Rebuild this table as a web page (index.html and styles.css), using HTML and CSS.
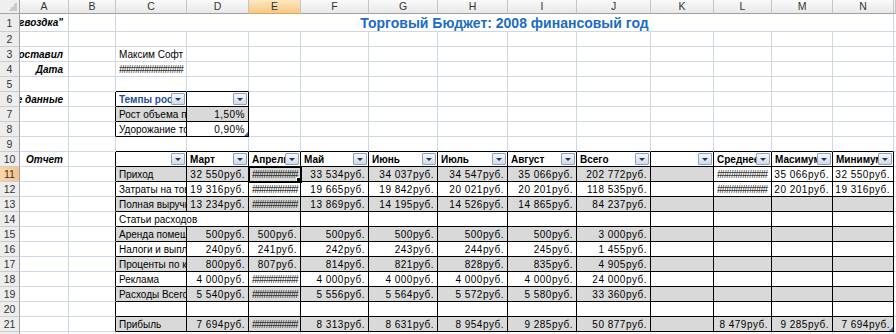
FILE: index.html
```html
<!DOCTYPE html>
<html lang="ru">
<head>
<meta charset="utf-8">
<title>Торговый Бюджет: 2008 финансовый год</title>
<link rel="stylesheet" href="styles.css">
</head>
<body>
<div class="sheet">
  <div class="row hdr">
    <div class="corner"></div>
    <div class="ch">A</div><div class="ch">B</div><div class="ch">C</div><div class="ch">D</div><div class="ch on">E</div><div class="ch">F</div><div class="ch">G</div><div class="ch">H</div><div class="ch">I</div><div class="ch">J</div><div class="ch">K</div><div class="ch">L</div><div class="ch">M</div><div class="ch">N</div><div class="ch"></div>
  </div>

  <div class="row r1">
    <div class="rh">1</div>
    <div class="c lab">гвоздка"</div>
    <div class="c"></div>
    <div class="c title">Торговый Бюджет: 2008 финансовый год</div>
    <div class="c"></div>
  </div>

  <div class="row">
    <div class="rh">2</div>
    <div class="c"></div><div class="c"></div><div class="c"></div><div class="c"></div><div class="c"></div><div class="c"></div><div class="c"></div><div class="c"></div><div class="c"></div><div class="c"></div><div class="c"></div><div class="c"></div><div class="c"></div><div class="c"></div><div class="c"></div>
  </div>

  <div class="row">
    <div class="rh">3</div>
    <div class="c lab">оставил</div><div class="c"></div><div class="c">Максим Софт</div><div class="c"></div><div class="c"></div><div class="c"></div><div class="c"></div><div class="c"></div><div class="c"></div><div class="c"></div><div class="c"></div><div class="c"></div><div class="c"></div><div class="c"></div><div class="c"></div>
  </div>

  <div class="row">
    <div class="rh">4</div>
    <div class="c lab">Дата</div><div class="c"></div><div class="c hash">##############</div><div class="c"></div><div class="c"></div><div class="c"></div><div class="c"></div><div class="c"></div><div class="c"></div><div class="c"></div><div class="c"></div><div class="c"></div><div class="c"></div><div class="c"></div><div class="c"></div>
  </div>

  <div class="row">
    <div class="rh">5</div>
    <div class="c"></div><div class="c"></div><div class="c kb"></div><div class="c kb"></div><div class="c"></div><div class="c"></div><div class="c"></div><div class="c"></div><div class="c"></div><div class="c"></div><div class="c"></div><div class="c"></div><div class="c"></div><div class="c"></div><div class="c"></div>
  </div>

  <div class="row">
    <div class="rh">6</div>
    <div class="c lab">е данные</div><div class="c kr"></div>
    <div class="c t hd blue"><span class="lbl">Темпы роста</span><i class="dd"></i></div>
    <div class="c t hd"><span class="lbl"></span><i class="dd"></i></div>
    <div class="c"></div><div class="c"></div><div class="c"></div><div class="c"></div><div class="c"></div><div class="c"></div><div class="c"></div><div class="c"></div><div class="c"></div><div class="c"></div><div class="c"></div>
  </div>

  <div class="row">
    <div class="rh">7</div>
    <div class="c"></div><div class="c kr"></div>
    <div class="c t g">Рост объема продаж</div><div class="c t g n">1,50%</div>
    <div class="c"></div><div class="c"></div><div class="c"></div><div class="c"></div><div class="c"></div><div class="c"></div><div class="c"></div><div class="c"></div><div class="c"></div><div class="c"></div><div class="c"></div>
  </div>

  <div class="row">
    <div class="rh">8</div>
    <div class="c"></div><div class="c kr"></div>
    <div class="c t">Удорожание товара</div><div class="c t n rs">0,90%</div>
    <div class="c"></div><div class="c"></div><div class="c"></div><div class="c"></div><div class="c"></div><div class="c"></div><div class="c"></div><div class="c"></div><div class="c"></div><div class="c"></div><div class="c"></div>
  </div>

  <div class="row">
    <div class="rh">9</div>
    <div class="c"></div><div class="c"></div>
    <div class="c kb"></div><div class="c kb"></div><div class="c kb"></div><div class="c kb"></div><div class="c kb"></div><div class="c kb"></div><div class="c kb"></div><div class="c kb"></div><div class="c kb"></div><div class="c kb"></div><div class="c kb"></div><div class="c kb"></div>
    <div class="c"></div>
  </div>

  <div class="row">
    <div class="rh">10</div>
    <div class="c lab">Отчет</div><div class="c kr"></div>
    <div class="c t hd"><span class="lbl"></span><i class="dd"></i></div>
    <div class="c t hd"><span class="lbl">Март</span><i class="dd"></i></div>
    <div class="c t hd"><span class="lbl">Апрель</span><i class="dd"></i></div>
    <div class="c t hd"><span class="lbl">Май</span><i class="dd"></i></div>
    <div class="c t hd"><span class="lbl">Июнь</span><i class="dd"></i></div>
    <div class="c t hd"><span class="lbl">Июль</span><i class="dd"></i></div>
    <div class="c t hd"><span class="lbl">Август</span><i class="dd"></i></div>
    <div class="c t hd"><span class="lbl">Всего</span><i class="dd"></i></div>
    <div class="c t hd"><span class="lbl"></span><i class="dd"></i></div>
    <div class="c t hd"><span class="lbl">Среднее</span><i class="dd"></i></div>
    <div class="c t hd"><span class="lbl">Масимум</span><i class="dd"></i></div>
    <div class="c t hd"><span class="lbl">Минимум</span><i class="dd"></i></div>
    <div class="c"></div>
  </div>

  <div class="row">
    <div class="rh on">11</div>
    <div class="c"></div><div class="c kr"></div>
    <div class="c t g">Приход</div>
    <div class="c t g n">32 550руб.</div>
    <div class="c t g hash sel">##########</div>
    <div class="c t g n">33 534руб.</div>
    <div class="c t g n">34 037руб.</div>
    <div class="c t g n">34 547руб.</div>
    <div class="c t g n">35 066руб.</div>
    <div class="c t g n">202 772руб.</div>
    <div class="c t g"></div>
    <div class="c t hash">###########</div>
    <div class="c t n">35 066руб.</div>
    <div class="c t n">32 550руб.</div>
    <div class="c"></div>
  </div>

  <div class="row">
    <div class="rh">12</div>
    <div class="c"></div><div class="c kr"></div>
    <div class="c t">Затраты на товары</div>
    <div class="c t n">19 316руб.</div>
    <div class="c t hash">##########</div>
    <div class="c t n">19 665руб.</div>
    <div class="c t n">19 842руб.</div>
    <div class="c t n">20 021руб.</div>
    <div class="c t n">20 201руб.</div>
    <div class="c t n">118 535руб.</div>
    <div class="c t"></div>
    <div class="c t hash">###########</div>
    <div class="c t n">20 201руб.</div>
    <div class="c t n">19 316руб.</div>
    <div class="c"></div>
  </div>

  <div class="row">
    <div class="rh">13</div>
    <div class="c"></div><div class="c kr"></div>
    <div class="c t g">Полная выручка</div>
    <div class="c t g n">13 234руб.</div>
    <div class="c t g hash">##########</div>
    <div class="c t g n">13 869руб.</div>
    <div class="c t g n">14 195руб.</div>
    <div class="c t g n">14 526руб.</div>
    <div class="c t g n">14 865руб.</div>
    <div class="c t g n">84 237руб.</div>
    <div class="c t g"></div><div class="c t g"></div><div class="c t g"></div><div class="c t g"></div>
    <div class="c"></div>
  </div>

  <div class="row">
    <div class="rh">14</div>
    <div class="c"></div><div class="c kr"></div>
    <div class="c t span2">Статьи расходов</div>
    <div class="c t"></div><div class="c t"></div><div class="c t"></div><div class="c t"></div><div class="c t"></div><div class="c t"></div><div class="c t"></div><div class="c t"></div><div class="c t"></div><div class="c t"></div>
    <div class="c"></div>
  </div>

  <div class="row">
    <div class="rh">15</div>
    <div class="c"></div><div class="c kr"></div>
    <div class="c t g">Аренда помещения</div>
    <div class="c t g n">500руб.</div>
    <div class="c t g n">500руб.</div>
    <div class="c t g n">500руб.</div>
    <div class="c t g n">500руб.</div>
    <div class="c t g n">500руб.</div>
    <div class="c t g n">500руб.</div>
    <div class="c t g n">3 000руб.</div>
    <div class="c t g"></div><div class="c t g"></div><div class="c t g"></div><div class="c t g"></div>
    <div class="c"></div>
  </div>

  <div class="row">
    <div class="rh">16</div>
    <div class="c"></div><div class="c kr"></div>
    <div class="c t">Налоги и выплаты</div>
    <div class="c t n">240руб.</div>
    <div class="c t n">241руб.</div>
    <div class="c t n">242руб.</div>
    <div class="c t n">243руб.</div>
    <div class="c t n">244руб.</div>
    <div class="c t n">245руб.</div>
    <div class="c t n">1 455руб.</div>
    <div class="c t"></div><div class="c t"></div><div class="c t"></div><div class="c t"></div>
    <div class="c"></div>
  </div>

  <div class="row">
    <div class="rh">17</div>
    <div class="c"></div><div class="c kr"></div>
    <div class="c t g">Проценты по кредиту</div>
    <div class="c t g n">800руб.</div>
    <div class="c t g n">807руб.</div>
    <div class="c t g n">814руб.</div>
    <div class="c t g n">821руб.</div>
    <div class="c t g n">828руб.</div>
    <div class="c t g n">835руб.</div>
    <div class="c t g n">4 905руб.</div>
    <div class="c t g"></div><div class="c t g"></div><div class="c t g"></div><div class="c t g"></div>
    <div class="c"></div>
  </div>

  <div class="row">
    <div class="rh">18</div>
    <div class="c"></div><div class="c kr"></div>
    <div class="c t">Реклама</div>
    <div class="c t n">4 000руб.</div>
    <div class="c t hash">##########</div>
    <div class="c t n">4 000руб.</div>
    <div class="c t n">4 000руб.</div>
    <div class="c t n">4 000руб.</div>
    <div class="c t n">4 000руб.</div>
    <div class="c t n">24 000руб.</div>
    <div class="c t"></div><div class="c t"></div><div class="c t"></div><div class="c t"></div>
    <div class="c"></div>
  </div>

  <div class="row">
    <div class="rh">19</div>
    <div class="c"></div><div class="c kr"></div>
    <div class="c t g">Расходы Всего</div>
    <div class="c t g n">5 540руб.</div>
    <div class="c t g hash">##########</div>
    <div class="c t g n">5 556руб.</div>
    <div class="c t g n">5 564руб.</div>
    <div class="c t g n">5 572руб.</div>
    <div class="c t g n">5 580руб.</div>
    <div class="c t g n">33 360руб.</div>
    <div class="c t g"></div><div class="c t g"></div><div class="c t g"></div><div class="c t g"></div>
    <div class="c"></div>
  </div>

  <div class="row">
    <div class="rh">20</div>
    <div class="c"></div><div class="c kr"></div>
    <div class="c t"></div><div class="c t"></div><div class="c t"></div><div class="c t"></div><div class="c t"></div><div class="c t"></div><div class="c t"></div><div class="c t"></div><div class="c t"></div><div class="c t"></div><div class="c t"></div><div class="c t"></div>
    <div class="c"></div>
  </div>

  <div class="row">
    <div class="rh">21</div>
    <div class="c"></div><div class="c kr"></div>
    <div class="c t g">Прибыль</div>
    <div class="c t g n">7 694руб.</div>
    <div class="c t g hash">##########</div>
    <div class="c t g n">8 313руб.</div>
    <div class="c t g n">8 631руб.</div>
    <div class="c t g n">8 954руб.</div>
    <div class="c t g n">9 285руб.</div>
    <div class="c t g n">50 877руб.</div>
    <div class="c t g"></div>
    <div class="c t g n">8 479руб.</div>
    <div class="c t g n">9 285руб.</div>
    <div class="c t g n rs">7 694руб.</div>
    <div class="c"></div>
  </div>

  <div class="row">
    <div class="rh">22</div>
    <div class="c"></div><div class="c"></div><div class="c"></div><div class="c"></div><div class="c"></div><div class="c"></div><div class="c"></div><div class="c"></div><div class="c"></div><div class="c"></div><div class="c"></div><div class="c"></div><div class="c"></div><div class="c"></div><div class="c"></div>
  </div>
</div>
</body>
</html>
```

FILE: styles.css
```css
* { box-sizing: border-box; margin: 0; padding: 0; }
html, body { background: #fff; }
body {
  margin: 0;
  width: 896px;
  height: 334px;
  overflow: hidden;
  font-family: "Liberation Sans", Arial, sans-serif;
  font-size: 10px;
  color: #000;
}
.sheet { display: flex; flex-direction: column; }
.row {
  display: grid;
  grid-template-columns: 20px 49px 47px 71px 62px 52px 68px 69px 70px 69px 74px 63px 58px 61px 61px 1fr;
  height: 15px;
  flex: none;
}
.hdr { height: 14px; }
.r1 { height: 18px; }

.corner {
  background:
    linear-gradient(to top left, #c9c9c9 50%, transparent 50%) no-repeat right 2px bottom 2px / 9px 9px,
    #efefef;
  border-right: 1px solid #a5a5a5;
  border-bottom: 1px solid #a5a5a5;
}
.ch {
  background: linear-gradient(#fafafa, #e8e8e8);
  border-right: 1px solid #c5c5c5;
  border-bottom: 1px solid #a0a0a0;
  color: #333;
  font-size: 10.5px;
  line-height: 13px;
  text-align: center;
}
.ch.on {
  background: linear-gradient(#fde7bf, #f7c986);
  border-bottom-color: #e4a35a;
}
.rh {
  background: #ededed;
  border-right: 1px solid #a0a0a0;
  border-bottom: 1px solid #cdcdcd;
  color: #333;
  font-size: 10.5px;
  display: flex;
  align-items: center;
  justify-content: center;
}
.rh.on { background: linear-gradient(to right, #fbd7a8, #f6c28a); }

.c {
  border-right: 1px solid #d0d7e5;
  border-bottom: 1px solid #d0d7e5;
  display: flex;
  align-items: center;
  overflow: hidden;
  white-space: nowrap;
  min-width: 0;
  padding: 0 3px;
}
.lab {
  justify-content: flex-end;
  padding-right: 5px;
  padding-left: 0;
  font-weight: bold;
  font-style: italic;
  font-size: 10px;
}
.title {
  grid-column: span 12;
  justify-content: center;
  font-weight: bold;
  font-size: 14px;
  color: #1b6cc4;
}
.n { justify-content: flex-end; padding-right: 3px; letter-spacing: 0.5px; }
.g { background: #d9d9d9; }
.t { border-right-color: #000; border-bottom-color: #000; }
.kr { border-right-color: #000; }
.kb { border-bottom-color: #000; }
.span2 { grid-column: span 2; }
.hash { letter-spacing: -1px; }

.hd { font-weight: bold; padding-right: 1px; }
.hd .lbl { flex: 1; min-width: 0; overflow: hidden; }
.blue { color: #1f4e9a; }
.dd {
  flex: none;
  width: 14px;
  height: 12px;
  border: 1px solid #8ea3c2;
  border-radius: 1px;
  background: linear-gradient(#f4f6fa, #d3dbe8);
  display: flex;
  align-items: center;
  justify-content: center;
}
.dd::after {
  content: "";
  border-left: 3px solid transparent;
  border-right: 3px solid transparent;
  border-top: 3px solid #26365a;
}

.sel {
  position: relative;
  outline: 2px solid #000;
  outline-offset: -1px;
}
.sel::after {
  content: "";
  position: absolute;
  right: -3px;
  bottom: -3px;
  width: 5px;
  height: 5px;
  background: #000;
  border: 1px solid #fff;
}
.rs { position: relative; }
.rs::after {
  content: "";
  position: absolute;
  right: 0;
  bottom: 0;
  border-left: 4px solid transparent;
  border-bottom: 4px solid #3f62a8;
}
```
